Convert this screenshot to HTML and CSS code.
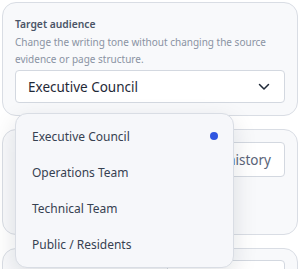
FILE: index.html
```html
<!DOCTYPE html>
<html lang="en">
<head>
    <meta charset="UTF-8">
    <title>Target audience</title>
    <link rel="stylesheet" href="styles.css">
</head>
<body>
    <div class="page">
        <section class="card">
            <label class="field-label" for="audience">Target audience</label>
            <p class="field-help">Change the writing tone without changing the source evidence or page structure.</p>
            <div class="select" id="audience">
                <span>Executive Council</span>
                <svg class="chevron" width="12" height="8" viewBox="0 0 12 8">
                    <path d="M1.5 1.5 L6 6 L10.5 1.5" fill="none" stroke="#1f2937" stroke-width="1.5" stroke-linecap="round" stroke-linejoin="round"/>
                </svg>
            </div>
        </section>

        <section class="card card-row">
            <div class="row-left"></div>
            <button class="ghost-btn">View history</button>
        </section>

        <section class="card card-row last">
            <div class="row-left"></div>
            <div class="ghost-btn"></div>
        </section>

        <ul class="menu">
            <li class="menu-item selected">Executive Council <span class="dot"></span></li>
            <li class="menu-item">Operations Team</li>
            <li class="menu-item">Technical Team</li>
            <li class="menu-item">Public / Residents</li>
        </ul>
    </div>
</body>
</html>
```

FILE: styles.css
```css
:root {
    --card-bg: #f8f9fb;
    --border: #d9dde4;
    --label: #4b5567;
    --muted: #8a93a3;
    --text: #1f2937;
    --accent: #2f55e0;
}

body {
    margin: 0;
    background: #ffffff;
    font-family: 'Noto Sans', sans-serif;
    color: var(--text);
}

.page {
    position: relative;
    height: 269px;
    overflow: hidden;
    padding: 2px;
    box-sizing: border-box;
    display: flex;
    flex-direction: column;
    gap: 13px;
}

.card {
    flex-shrink: 0;
    background: var(--card-bg);
    border: 1px solid var(--border);
    border-radius: 14px;
    padding: 13px 12px 12px;
}

.field-label {
    display: block;
    font-size: 10.3px;
    line-height: 16px;
    font-weight: 600;
    color: var(--label);
}

.field-help {
    margin: 2px 0 2px;
    font-size: 10px;
    line-height: 17px;
    color: var(--muted);
}

.select {
    height: 31px;
    background: #fff;
    border: 1px solid #d3d8e0;
    border-radius: 4px;
    display: flex;
    align-items: center;
    justify-content: space-between;
    padding: 0 14px 0 12px;
    font-size: 13.5px;
}

.chevron {
    display: block;
}

.card-row {
    display: flex;
    gap: 12px;
    height: 80px;
    padding-top: 12px;
}

.card-row.last {
    padding-top: 11px;
}

.row-left {
    flex: 1;
}

.ghost-btn {
    width: 118px;
    height: 35px;
    box-sizing: border-box;
    background: #fff;
    border: 1px solid #d3d8e0;
    border-radius: 4px;
    font-family: inherit;
    font-size: 13.5px;
    color: #5a6478;
    text-align: right;
    padding: 0 13px;
}

.menu {
    position: absolute;
    left: 15px;
    top: 113px;
    width: 217px;
    margin: 0;
    padding: 4px 0 5px;
    list-style: none;
    background: #f6f7fa;
    border: 1px solid var(--border);
    border-radius: 12px;
    box-shadow: 0 8px 24px rgba(15, 23, 42, 0.12);
}

.menu-item {
    height: 36px;
    display: flex;
    align-items: center;
    justify-content: space-between;
    padding: 0 15px 0 16px;
    font-size: 12px;
    color: #374151;
}

.dot {
    width: 8px;
    height: 8px;
    border-radius: 50%;
    background: var(--accent);
}
```
